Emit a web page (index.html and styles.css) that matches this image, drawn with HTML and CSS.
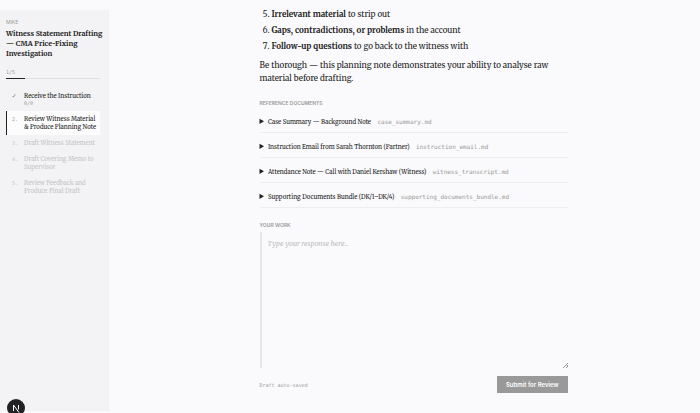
FILE: index.html
```html
<!DOCTYPE html>
<html lang="en">
<head>
    <meta charset="UTF-8">
    <meta name="viewport" content="width=device-width, initial-scale=1.0">
    <title>Witness Statement Drafting</title>
    <link rel="stylesheet" href="styles.css">
</head>
<body>
    <div class="app">
        <aside class="sidebar">
            <p class="brand">MIKE</p>
            <h1 class="title">Witness Statement Drafting<br>— CMA Price-Fixing<br>Investigation</h1>
            <p class="count">1/5</p>
            <div class="progress"><div class="progress-bar" style="width: 20%"></div></div>
            <ol class="steps">
                <li class="step done">
                    <span class="num">✓</span>
                    <div class="name">Receive the Instruction<small class="score">0/0</small></div>
                </li>
                <li class="step active">
                    <span class="num">2.</span>
                    <div class="name">Review Witness Material<br>&amp; Produce Planning Note</div>
                </li>
                <li class="step">
                    <span class="num">3.</span>
                    <div class="name">Draft Witness Statement</div>
                </li>
                <li class="step">
                    <span class="num">4.</span>
                    <div class="name">Draft Covering Memo to<br>Supervisor</div>
                </li>
                <li class="step">
                    <span class="num">5.</span>
                    <div class="name">Review Feedback and<br>Produce Final Draft</div>
                </li>
            </ol>
        </aside>
        <main class="main">
            <div class="content">
                <ol class="tasks" start="5">
                    <li><strong>Irrelevant material</strong> to strip out</li>
                    <li><strong>Gaps, contradictions, or problems</strong> in the account</li>
                    <li><strong>Follow-up questions</strong> to go back to the witness with</li>
                </ol>
                <p class="note">Be thorough — this planning note demonstrates your ability to analyse raw material before drafting.</p>

                <h2 class="label">REFERENCE DOCUMENTS</h2>
                <div class="docs">
                    <details class="doc">
                        <summary>Case Summary — Background Note <span class="file">case_summary.md</span></summary>
                    </details>
                    <details class="doc">
                        <summary>Instruction Email from Sarah Thornton (Partner) <span class="file">instruction_email.md</span></summary>
                    </details>
                    <details class="doc">
                        <summary>Attendance Note — Call with Daniel Kershaw (Witness) <span class="file">witness_transcript.md</span></summary>
                    </details>
                    <details class="doc">
                        <summary>Supporting Documents Bundle (DK/1–DK/4) <span class="file">supporting_documents_bundle.md</span></summary>
                    </details>
                </div>

                <label class="label" for="work">YOUR WORK</label>
                <textarea class="work" id="work" placeholder="Type your response here..."></textarea>
                <div class="actions">
                    <span class="saved">Draft auto-saved</span>
                    <button class="submit" type="button">Submit for Review</button>
                </div>
            </div>
        </main>
    </div>
    <button class="badge" type="button" aria-label="Open tools">
        <svg viewBox="0 0 18 18" width="18" height="18">
            <path d="M6.5 12V6l5.5 7.5M11.5 6v4.5" fill="none" stroke="#fff" stroke-width="1"/>
        </svg>
    </button>
</body>
</html>
```

FILE: styles.css
```css
*{
    box-sizing: border-box;
    margin: 0;
    padding: 0;
}
body{
    background-color: #fafafc;
    color: #222;
    font-family: Merriweather, "DejaVu Serif", serif;
    font-size: 8px;
    overflow: hidden;
}
.app{
    display: flex;
    height: 100vh;
}
.sidebar{
    width: 109px;
    margin: 10px 0 2px;
    padding: 8px 8px 0 6px;
    background-color: #f3f3f5;
    border-right: 1px solid #f0f0f2;
}
.brand{
    color: #999;
    font-family: Inter, sans-serif;
    font-size: 5px;
    line-height: 8px;
}
.title{
    margin-top: 3px;
    font-size: 7px;
    line-height: 10px;
    white-space: nowrap;
}
.count{
    margin-top: 9px;
    color: #999;
    font-family: "DejaVu Sans Mono", monospace;
    font-size: 5px;
    line-height: 8px;
}
.progress{
    height: 1px;
    margin-top: 2px;
    background-color: #dfdfe1;
}
.progress-bar{
    height: 1px;
    background-color: #222;
}
.steps{
    margin-top: 9px;
    list-style: none;
}
.step{
    display: flex;
    padding: 4px 0 4px 5px;
    border-left: 1px solid transparent;
    color: #c4c4c6;
    font-size: 6px;
    line-height: 8px;
}
.num{
    width: 12px;
    font-family: "DejaVu Sans Mono", monospace;
    font-size: 5px;
}
.done, .active{
    color: #222;
}
.done .num{
    color: #4d8a63;
    font-size: 7px;
}
.active{
    background-color: #fcfcfd;
    border-left-color: #222;
}
.active .num{
    color: #999;
}
.score{
    display: block;
    color: #999;
    font-family: "DejaVu Sans Mono", monospace;
    font-size: 5px;
    line-height: 7px;
}
.main{
    flex: 1;
    padding: 8px 0 0 18px;
}
.content{
    width: 308px;
    margin: 0 auto;
}
.tasks{
    padding-left: 12px;
}
.tasks li{
    margin-bottom: 3px;
    line-height: 13px;
}
.note{
    margin-top: 6px;
    line-height: 13px;
}
.label{
    display: block;
    color: #999;
    font-family: Inter, sans-serif;
    font-size: 5px;
    font-weight: 600;
    line-height: 8px;
}
.note + .label{
    margin-top: 14px;
}
.docs{
    margin-top: 1px;
    margin-bottom: 13px;
}
.doc{
    padding: 8px 0 5px;
    border-bottom: 1px solid #eeeef0;
    font-size: 6px;
    line-height: 10px;
}
.doc summary::marker{
    font-size: 8px;
}
.file{
    margin-left: 5px;
    color: #999;
    font-family: "DejaVu Sans Mono", monospace;
    font-size: 6px;
}
.work{
    display: block;
    width: 100%;
    height: 136px;
    margin-top: 3px;
    padding: 5px 6px;
    background-color: transparent;
    border: 0;
    border-left: 2px solid #e6e6e8;
    color: #222;
    font-family: inherit;
    font-size: 7px;
    line-height: 13px;
    outline: none;
    resize: vertical;
}
.work::placeholder{
    color: #bbb;
    font-style: italic;
}
.work::-webkit-resizer{
    background: linear-gradient(135deg, transparent 45%, #999 45%, #999 55%, transparent 55%, transparent 70%, #999 70%, #999 85%, transparent 85%) no-repeat right bottom / 5px 5px;
}
.actions{
    display: flex;
    align-items: center;
    justify-content: space-between;
    margin-top: 8px;
}
.saved{
    color: #999;
    font-family: "DejaVu Sans Mono", monospace;
    font-size: 5px;
}
.submit{
    padding: 4px 9px;
    background-color: #999;
    border: 0;
    color: #fff;
    font-family: Inter, sans-serif;
    font-size: 6px;
    font-weight: 600;
    line-height: 9px;
}
.badge{
    position: fixed;
    bottom: -4px;
    left: 7px;
    width: 18px;
    height: 18px;
    background-color: #222;
    border: 0;
    border-radius: 50%;
}
.badge svg{
    display: block;
}
```
